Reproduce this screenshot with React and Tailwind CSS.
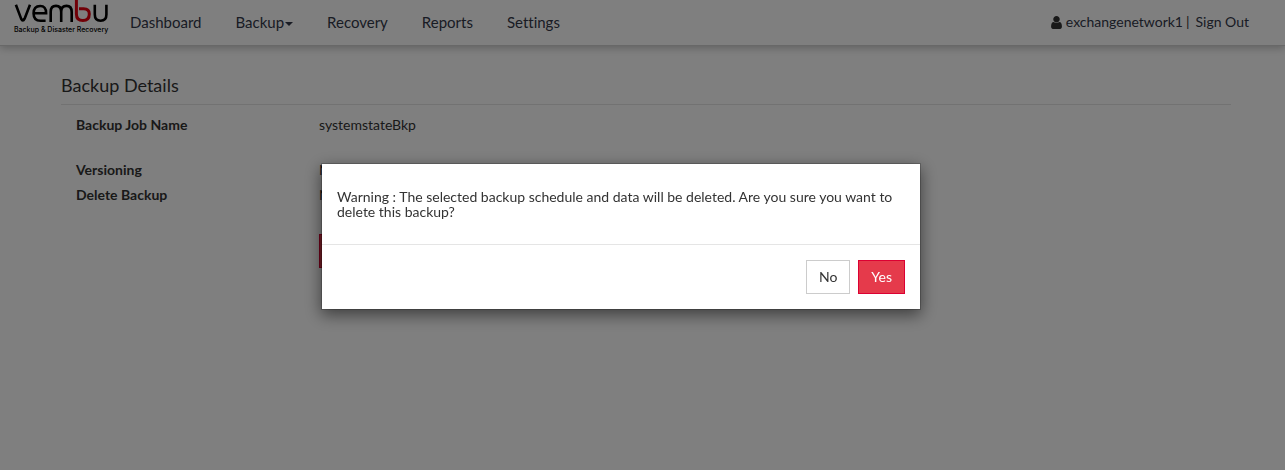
const navItems = [
  { label: 'Dashboard' },
  { label: 'Backup', hasMenu: true },
  { label: 'Recovery' },
  { label: 'Reports' },
  { label: 'Settings' },
];

const Logo = () => (
  <a href="#" className="flex w-24 flex-col text-black">
    <svg viewBox="0 0 96 24" className="h-6 w-24" fill="none" stroke="currentColor" strokeWidth="2.6" role="img" aria-label="Vembu">
      <path d="M1.9 4.8L7.1 18.6Q8.8 22.2 10.6 18.6L16 4.8" />
      <path d="M20.6 13.2H32.1Q32.1 6 26.2 6Q19.6 6 19.6 13.4Q19.6 20.7 26.6 20.7H31.6" />
      <path d="M36.7 22V12Q36.7 5.9 42 5.9Q47.2 5.9 47.2 12V22M47.2 12Q47.2 5.9 52.5 5.9Q57.7 5.9 57.7 12V22" />
      <path stroke="#e3000f" strokeWidth="3" d="M62.4 0V14Q62.4 20.6 68.9 20.6Q75.3 20.6 75.3 14Q75.3 8.8 69.6 8.8H65" />
      <path d="M80.8 4.8V14.5Q80.8 20.7 86.6 20.7Q92.4 20.7 92.4 14.5V4.8" />
    </svg>
    <span className="whitespace-nowrap pt-px font-['Inter',sans-serif] text-[7px] leading-[10px] font-medium">
      Backup &amp; Disaster Recovery
    </span>
  </a>
);

const UserIcon = () => (
  <svg viewBox="0 128 1280 1536" className="mr-1 h-[13px] w-[11px] text-[#333]" fill="currentColor" aria-hidden="true">
    <path d="M1280 1399q0 109-62.5 187t-150.5 78h-854q-88 0-150.5-78t-62.5-187q0-85 8.5-160.5t31.5-152 58.5-131 94-89 134.5-34.5q131 128 313 128t313-128q76 0 134.5 34.5t94 89 58.5 131 31.5 152 8.5 160.5zm-256-887q0 159-112.5 271.5t-271.5 112.5-271.5-112.5-112.5-271.5 112.5-271.5 271.5-112.5 271.5 112.5 112.5 271.5z" />
  </svg>
);

const Header = () => (
  <header className="flex h-[46px] items-start border-b border-[#d0d0d0] pr-9 pl-[14px] shadow-[0_2px_8px_rgba(0,0,0,0.25)]">
    <Logo />
    <nav className="ml-1 flex gap-0.5 text-[15px] leading-5 text-[#333849]">
      {navItems.map((item) => (
        <a key={item.label} href="#" className="flex items-center px-4 pt-3">
          {item.label}
          {item.hasMenu && (
            <span className="mt-1 ml-px border-x-4 border-t-4 border-x-transparent border-t-current" />
          )}
        </a>
      ))}
    </nav>
    <div className="ml-auto flex items-center pt-3 text-sm leading-5 text-[#333849]">
      <UserIcon />
      <span>exchangenetwork1</span>
      <span className="mr-1.5 ml-[3px] text-[#333]">|</span>
      <a href="#">Sign Out</a>
    </div>
  </header>
);

const DetailRow = ({ label, children }) => (
  <div className="flex">
    <dt className="w-[243px] font-bold">{label}</dt>
    <dd>{children}</dd>
  </div>
);

const BackupDetails = () => (
  <main className="pt-[29px] pr-[54px] pl-[61px]">
    <h1 className="border-b border-[#e5e5e5] pb-2 text-lg leading-[21px]">Backup Details</h1>
    <div className="px-[15px] pt-[7px]">
      <dl className="text-sm leading-[25px]">
        <DetailRow label="Backup Job Name">systemstateBkp</DetailRow>
        <div className="mt-5">
          <DetailRow label="Versioning">No</DetailRow>
        </div>
        <DetailRow label="Delete Backup">No</DetailRow>
      </dl>
      <button className="mt-[27px] ml-[243px] h-[34px] border border-[#dc0032] bg-[#e53a4b] px-3 text-sm text-white">
        Delete
      </button>
    </div>
  </main>
);

const ConfirmDialog = () => (
  <div className="fixed inset-0 flex items-start justify-center bg-black/50 pt-[163px] pr-[43px]">
    <div
      role="dialog"
      aria-modal="true"
      aria-describedby="confirm-message"
      className="w-[600px] border border-black/20 bg-white bg-clip-padding shadow-[0_5px_15px_rgba(0,0,0,0.5)]"
    >
      <p id="confirm-message" className="px-[15px] py-[25px] text-sm leading-[15px]">
        Warning : The selected backup schedule and data will be deleted. Are you sure you want to delete this backup?
      </p>
      <div className="flex justify-end gap-2 border-t border-[#e5e5e5] p-[15px]">
        <button className="h-[34px] border border-[#ccc] bg-white px-3 text-sm">No</button>
        <button className="h-[34px] border border-[#dc0032] bg-[#e53a4b] px-3 text-sm text-white">Yes</button>
      </div>
    </div>
  </div>
);

const App = () => (
  <div className="min-h-screen bg-white font-['Lato',sans-serif] text-[#333] [font-variant-ligatures:none]">
    <Header />
    <BackupDetails />
    <ConfirmDialog />
  </div>
);

export default App;
